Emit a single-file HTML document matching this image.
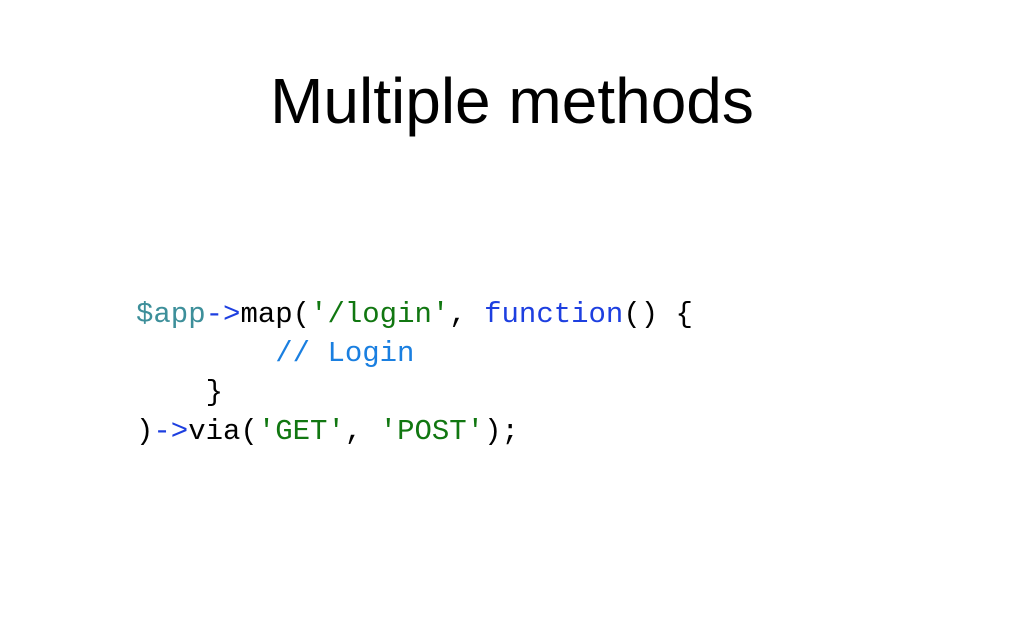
<!DOCTYPE html>
<html><head><meta charset="utf-8"><style>
body{margin:0;width:1024px;height:641px;background:#fff;position:relative;overflow:hidden}
.t{position:absolute;left:0;width:1024px;top:69px;text-align:center;font-family:"Liberation Sans",sans-serif;font-size:64px;line-height:64px;color:#000}
pre{position:absolute;left:136px;top:295px;margin:0;font-family:"Liberation Mono",monospace;font-size:29px;line-height:39px;color:#000}
.v{color:#3d8f9a}.o{color:#1d3fe0}.s{color:#117711}.k{color:#1d3fe0}.c{color:#1a7fe0}
</style></head><body>
<div class="t">Multiple methods</div>
<pre><span class="v">$app</span><span class="o">-&gt;</span>map(<span class="s">'/login'</span>, <span class="k">function</span>() {
        <span class="c">// Login</span>
    }
)<span class="o">-&gt;</span>via(<span class="s">'GET'</span>, <span class="s">'POST'</span>);</pre>
</body></html>
